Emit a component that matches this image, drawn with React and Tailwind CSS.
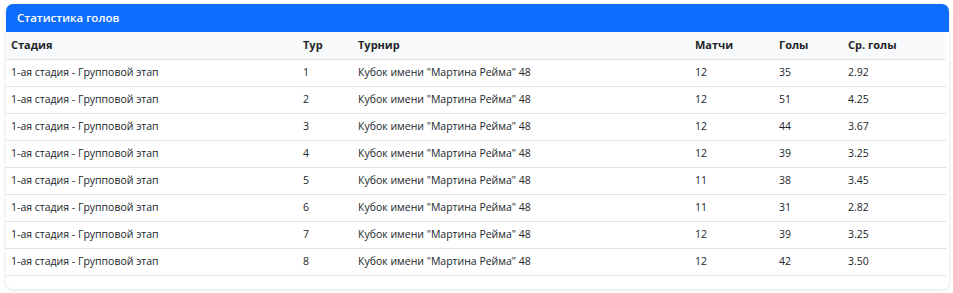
import React from "react";

const rows = [
  [1, 12, 35, "2.92"],
  [2, 12, 51, "4.25"],
  [3, 12, 44, "3.67"],
  [4, 12, 39, "3.25"],
  [5, 11, 38, "3.45"],
  [6, 11, 31, "2.82"],
  [7, 12, 39, "3.25"],
  [8, 12, 42, "3.50"],
];

export default function App() {
  return (
    <div className="w-[953px] h-[293px] bg-white pt-[4px] pl-[6px] pr-[4px]" style={{ fontFamily: '"Open Sans", "Noto Sans", sans-serif' }}>
      <div className="rounded-[7px] bg-white shadow-[0_1px_4px_rgba(0,0,0,0.12)] pb-[13px] overflow-hidden">
        <div className="h-[28px] bg-[#0d6efd] flex items-center pl-[11px] text-white text-[11.5px] font-semibold">
          Статистика голов
        </div>
        <div className="pr-[3px]">
          <table className="w-full border-collapse table-fixed text-[10.5px] text-[#212529]">
            <colgroup>
              <col className="w-[292px]" />
              <col className="w-[55px]" />
              <col className="w-[337px]" />
              <col className="w-[84px]" />
              <col className="w-[69px]" />
              <col />
            </colgroup>
            <thead>
              <tr className="h-[27px] bg-[#f8f9fa] border-b border-[#dee2e6] text-left text-[11px]">
                <th className="pl-[5px] font-bold">Стадия</th>
                <th className="pl-[5px] font-bold">Тур</th>
                <th className="pl-[5px] font-bold">Турнир</th>
                <th className="pl-[5px] font-bold">Матчи</th>
                <th className="pl-[5px] font-bold">Голы</th>
                <th className="pl-[5px] font-bold">Ср. голы</th>
              </tr>
            </thead>
            <tbody>
              {rows.map((r) => (
                <tr key={r[0]} className="h-[27px] border-b border-[#dee2e6]">
                  <td className="pl-[5px]">1-ая стадия - Групповой этап</td>
                  <td className="pl-[5px]">{r[0]}</td>
                  <td className="pl-[5px]">Кубок имени "Мартина Рейма" 48</td>
                  <td className="pl-[5px]">{r[1]}</td>
                  <td className="pl-[5px]">{r[2]}</td>
                  <td className="pl-[5px]">{r[3]}</td>
                </tr>
              ))}
            </tbody>
          </table>
        </div>
      </div>
    </div>
  );
}
